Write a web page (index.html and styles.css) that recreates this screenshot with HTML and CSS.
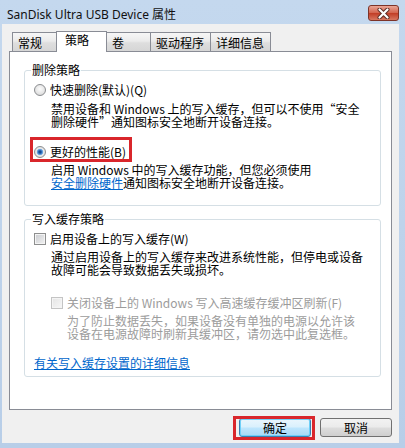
FILE: index.html
```html
<!DOCTYPE html>
<html lang="zh-CN">
  <head>
    <meta charset="UTF-8" />
    <title>SanDisk Ultra USB Device 属性</title>
    <link rel="stylesheet" href="styles.css">
  </head>
  <body>
    <div class="titlebar">
      <span class="title">SanDisk Ultra USB Device 属性</span>
      <span class="close">
        <svg width="13" height="11" viewBox="0 0 13 11">
          <path d="M2.5 1.5 L10.5 9.5 M10.5 1.5 L2.5 9.5" stroke="#5a2a22" stroke-width="4" stroke-linecap="round" />
          <path d="M2.5 1.5 L10.5 9.5 M10.5 1.5 L2.5 9.5" stroke="#fff" stroke-width="2.2" stroke-linecap="round" />
        </svg>
      </span>
    </div>
    <div class="client">
      <div class="tabs">
        <span class="tab">常规</span>
        <span class="tab active">策略</span>
        <span class="tab">卷</span>
        <span class="tab">驱动程序</span>
        <span class="tab">详细信息</span>
      </div>
      <div class="panel">
        <fieldset class="group">
          <legend>删除策略</legend>
          <div class="option"><span class="radio"></span><span>快速删除(默认)(Q)</span></div>
          <p class="desc">禁用设备和 Windows 上的写入缓存，但可以不使用“安全<br>删除硬件”通知图标安全地断开设备连接。</p>
          <div class="option option-next mark"><span class="radio on"></span><span>更好的性能(B)</span></div>
          <p class="desc desc-tight">启用 Windows 中的写入缓存功能，但您必须使用<br><a href="#">安全删除硬件</a>通知图标安全地断开设备连接。</p>
        </fieldset>
        <fieldset class="group group-cache">
          <legend>写入缓存策略</legend>
          <div class="option"><span class="check"></span><span>启用设备上的写入缓存(W)</span></div>
          <p class="desc desc-tight">通过启用设备上的写入缓存来改进系统性能，但停电或设备<br>故障可能会导致数据丢失或损坏。</p>
          <div class="option sub disabled"><span class="check"></span><span>关闭设备上的 Windows 写入高速缓存缓冲区刷新(F)</span></div>
          <p class="desc desc-tight sub-desc disabled">为了防止数据丢失，如果设备没有单独的电源以允许该<br>设备在电源故障时刷新其缓冲区，请勿选中此复选框。</p>
          <a class="more" href="#">有关写入缓存设置的详细信息</a>
        </fieldset>
      </div>
      <div class="buttons">
        <button class="btn default mark">确定</button>
        <button class="btn">取消</button>
      </div>
    </div>
  </body>
</html>
```

FILE: styles.css
```css
* {
  box-sizing: border-box;
}
body {
  margin: 0;
  width: 405px;
  height: 448px;
  overflow: hidden;
  background: linear-gradient(#c4d8ee, #b8cee8);
  font: 12px/13px "Noto Sans CJK SC", sans-serif;
  color: #000;
}
.titlebar {
  display: flex;
  justify-content: space-between;
  height: 24px;
  padding: 0 6px 0 7px;
}
.title {
  font-family: "Noto Sans", "Noto Sans CJK SC", sans-serif;
  font-size: 12px;
  line-height: 18px;
  padding-top: 6px;
  color: #111;
}
.close {
  display: flex;
  align-items: center;
  justify-content: center;
  margin-top: 5px;
  width: 31px;
  height: 16px;
  border: 1px solid #7d3328;
  border-radius: 3px;
  background: linear-gradient(#eaa596, #d3654f 48%, #c13d26 52%, #d77760);
}
.client {
  margin: 0 6px 0 2px;
  height: 419px;
  padding: 7px 7px 0;
  background: #f0f0f0;
}

/* tabs */
.tabs {
  display: flex;
  align-items: flex-end;
  height: 20px;
  padding-left: 3px;
}
.tab {
  height: 19px;
  min-width: 45px;
  padding: 3px 6px 0 5px;
  border: 1px solid #898c95;
  border-bottom: none;
  background: linear-gradient(#f6f6f6, #ebebeb 45%, #dedede 55%, #d6d6d6);
  line-height: 14px;
  white-space: nowrap;
}
.tab + .tab {
  margin-left: -1px;
}
.tab.active {
  position: relative;
  z-index: 1;
  height: 21px;
  min-width: 51px;
  margin-bottom: -1px;
  padding: 1px 6px 0 8px;
  background: #fff;
}
.panel {
  height: 359px;
  padding: 11px 10px 0 14px;
  border: 1px solid #898c95;
  background: #fff;
}

/* group boxes */
.group {
  margin: 0;
  min-width: 0;
  padding: 6px 8px 16px 9px;
  border: 1px solid #d5dfe5;
  border-radius: 3px;
}
.group legend {
  margin-left: -3px;
  padding: 0 1px;
  line-height: 14px;
}
.group-cache {
  margin-top: 6px;
  padding-bottom: 7px;
}
.option {
  display: flex;
  align-items: center;
  gap: 4px;
  width: fit-content;
  height: 13px;
  white-space: nowrap;
}
.option-next {
  margin-top: 17px;
}
.desc {
  margin: 6px 0 0 17px;
  white-space: nowrap;
}
.desc-tight {
  margin-top: 5px;
}
.sub {
  margin: 20px 0 0 17px;
}
.sub-desc {
  margin-left: 33px;
}
.disabled {
  color: #9c9c9c;
}
a {
  color: #0066cc;
  text-decoration: underline;
}
.more {
  display: block;
  width: fit-content;
  margin-top: 16px;
}

/* controls */
.radio {
  flex: none;
  width: 12px;
  height: 12px;
  border: 1px solid #8b8d90;
  border-radius: 50%;
  background: radial-gradient(circle at 50% 40%, #fcfcfc, #e4e4e4 60%, #cdcdcd);
}
.radio.on {
  background: radial-gradient(circle, #0d3a70 0, #2463b4 1.5px, #7fb4e6 3px, #eaeaea 3.6px, #d0d0d0 100%);
}
.check {
  flex: none;
  width: 12px;
  height: 12px;
  border: 1px solid #8e8f8f;
  background: linear-gradient(135deg, #c9cbcf, #f2f2f2);
  box-shadow: inset 0 0 0 1px #f4f4f4;
}
.disabled .check {
  border-color: #c4c4c4;
  background: linear-gradient(135deg, #e4e4e4, #f7f7f7);
}

/* buttons */
.buttons {
  display: flex;
  justify-content: flex-end;
  gap: 9px;
  margin-top: 8px;
}
.btn {
  width: 72px;
  height: 19px;
  padding: 0;
  border: 1px solid #707070;
  border-radius: 3px;
  background: linear-gradient(#f2f2f2, #ebebeb 48%, #dddddd 52%, #cfcfcf);
  font: 12px/17px "Noto Sans CJK SC", sans-serif;
  color: #000;
}
.btn.default {
  border-color: #3c7fb1;
  background: linear-gradient(#eaf6fd, #d9f0fc 48%, #bee6fd 52%, #a7d9f5);
  box-shadow: inset 0 0 0 1px #6fd0f8;
}

/* red annotation boxes */
.mark {
  position: relative;
}
.mark::after {
  content: "";
  position: absolute;
  top: -8px;
  right: -6px;
  bottom: -4px;
  left: -4px;
  border: 3px solid #d9262b;
}
.btn.mark::after {
  top: -3px;
  right: -5px;
  bottom: -4px;
  left: -7px;
}
```
